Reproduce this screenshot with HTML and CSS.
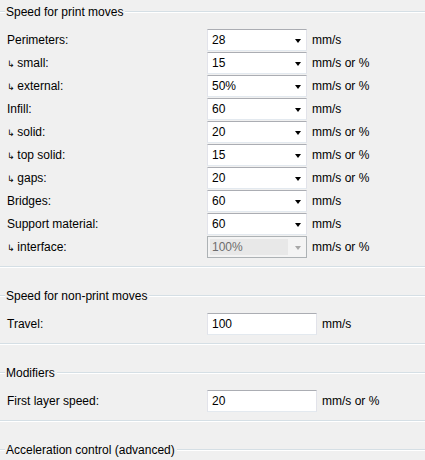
FILE: index.html
```html
<!DOCTYPE html>
<html>
<head>
<meta charset="utf-8">
<link rel="stylesheet" href="styles.css">
</head>
<body>
<div class="page">
  <section class="group">
    <div class="legend"><span class="line lead"></span><span class="title">Speed for print moves</span><span class="line"></span></div>
    <div class="rows">
      <div class="row"><span class="label">Perimeters:</span><div class="combo"><span class="value">28</span><span class="arrow"></span></div><span class="unit">mm/s</span></div>
      <div class="row"><span class="label"><span class="sub">↳</span> small:</span><div class="combo"><span class="value">15</span><span class="arrow"></span></div><span class="unit">mm/s or %</span></div>
      <div class="row"><span class="label"><span class="sub">↳</span> external:</span><div class="combo"><span class="value">50%</span><span class="arrow"></span></div><span class="unit">mm/s or %</span></div>
      <div class="row"><span class="label">Infill:</span><div class="combo"><span class="value">60</span><span class="arrow"></span></div><span class="unit">mm/s</span></div>
      <div class="row"><span class="label"><span class="sub">↳</span> solid:</span><div class="combo"><span class="value">20</span><span class="arrow"></span></div><span class="unit">mm/s or %</span></div>
      <div class="row"><span class="label"><span class="sub">↳</span> top solid:</span><div class="combo"><span class="value">15</span><span class="arrow"></span></div><span class="unit">mm/s or %</span></div>
      <div class="row"><span class="label"><span class="sub">↳</span> gaps:</span><div class="combo"><span class="value">20</span><span class="arrow"></span></div><span class="unit">mm/s or %</span></div>
      <div class="row"><span class="label">Bridges:</span><div class="combo"><span class="value">60</span><span class="arrow"></span></div><span class="unit">mm/s</span></div>
      <div class="row"><span class="label">Support material:</span><div class="combo"><span class="value">60</span><span class="arrow"></span></div><span class="unit">mm/s</span></div>
      <div class="row"><span class="label"><span class="sub">↳</span> interface:</span><div class="combo disabled"><span class="value">100%</span><span class="arrow"></span></div><span class="unit">mm/s or %</span></div>
    </div>
  </section>

  <section class="group">
    <div class="legend"><span class="line lead"></span><span class="title">Speed for non-print moves</span><span class="line"></span></div>
    <div class="rows">
      <div class="row"><span class="label">Travel:</span><div class="text"><span class="value">100</span></div><span class="unit">mm/s</span></div>
    </div>
  </section>

  <section class="group">
    <div class="legend"><span class="line lead"></span><span class="title">Modifiers</span><span class="line"></span></div>
    <div class="rows">
      <div class="row"><span class="label">First layer speed:</span><div class="text"><span class="value">20</span></div><span class="unit">mm/s or %</span></div>
    </div>
  </section>

  <section class="group last">
    <div class="legend"><span class="line lead"></span><span class="title">Acceleration control (advanced)</span><span class="line"></span></div>
  </section>
</div>
</body>
</html>
```

FILE: styles.css
```css
html, body {
  margin: 0;
  padding: 0;
  background: #f0f0f0;
  overflow: hidden;
}

body {
  font-family: "Liberation Sans", Arial, sans-serif;
  font-size: 12px;
  color: #000;
}

.page {
  padding-top: 4px;
  width: 425px;
  height: 456px;
  overflow: hidden;
}

.group {
  border-bottom: 1px solid #d5dfe5;
  box-shadow: 0 1px 0 #ffffff;
  padding-bottom: 8px;
  margin-bottom: 21px;
}

.group.last {
  border-bottom: 0;
  box-shadow: none;
  padding-bottom: 0;
  margin-bottom: 0;
}

.legend {
  display: flex;
  align-items: center;
  height: 16px;
  line-height: 16px;
}

.line {
  flex: 1;
  height: 0;
  border-top: 1px solid #d5dfe5;
  border-bottom: 1px solid #ffffff;
}

.line.lead {
  flex: 0 0 5px;
}

.title {
  padding: 0 2px 0 1px;
  white-space: nowrap;
}

.rows {
  display: flex;
  flex-direction: column;
  gap: 1px;
  margin-top: 9px;
  padding-left: 7px;
}

.row {
  display: flex;
  align-items: center;
  height: 22px;
}

.label {
  width: 200px;
  white-space: nowrap;
}

.sub {
  font-family: "DejaVu Sans", sans-serif;
  font-size: 9px;
  display: inline-block;
  width: 7px;
}

.combo, .text {
  box-sizing: border-box;
  height: 22px;
  background: #fff;
  border: 1px solid #e2e3ea;
  border-top-color: #abadb3;
  border-bottom-color: #e3e9ef;
  display: flex;
  align-items: center;
  position: relative;
}

.combo {
  width: 100px;
}

.text {
  width: 110px;
}

.value {
  padding-left: 4px;
  flex: 1;
}

.arrow {
  width: 0;
  height: 0;
  border-left: 3.5px solid transparent;
  border-right: 3.5px solid transparent;
  border-top: 4px solid #000;
  margin-right: 5px;
  margin-top: 1px;
}

.combo.disabled {
  background: #f4f4f4;
  border-color: #adb2b5;
}

.combo.disabled .value {
  color: #6d6d6d;
  background: #e8e8e8;
  margin: 2px 18px 2px 2px;
  padding-left: 2px;
  height: 16px;
  line-height: 16px;
}

.combo.disabled .arrow {
  border-top-color: #a8a8a8;
  position: absolute;
  right: 0;
  top: 8px;
}

.unit {
  margin-left: 5px;
  white-space: nowrap;
}
```
